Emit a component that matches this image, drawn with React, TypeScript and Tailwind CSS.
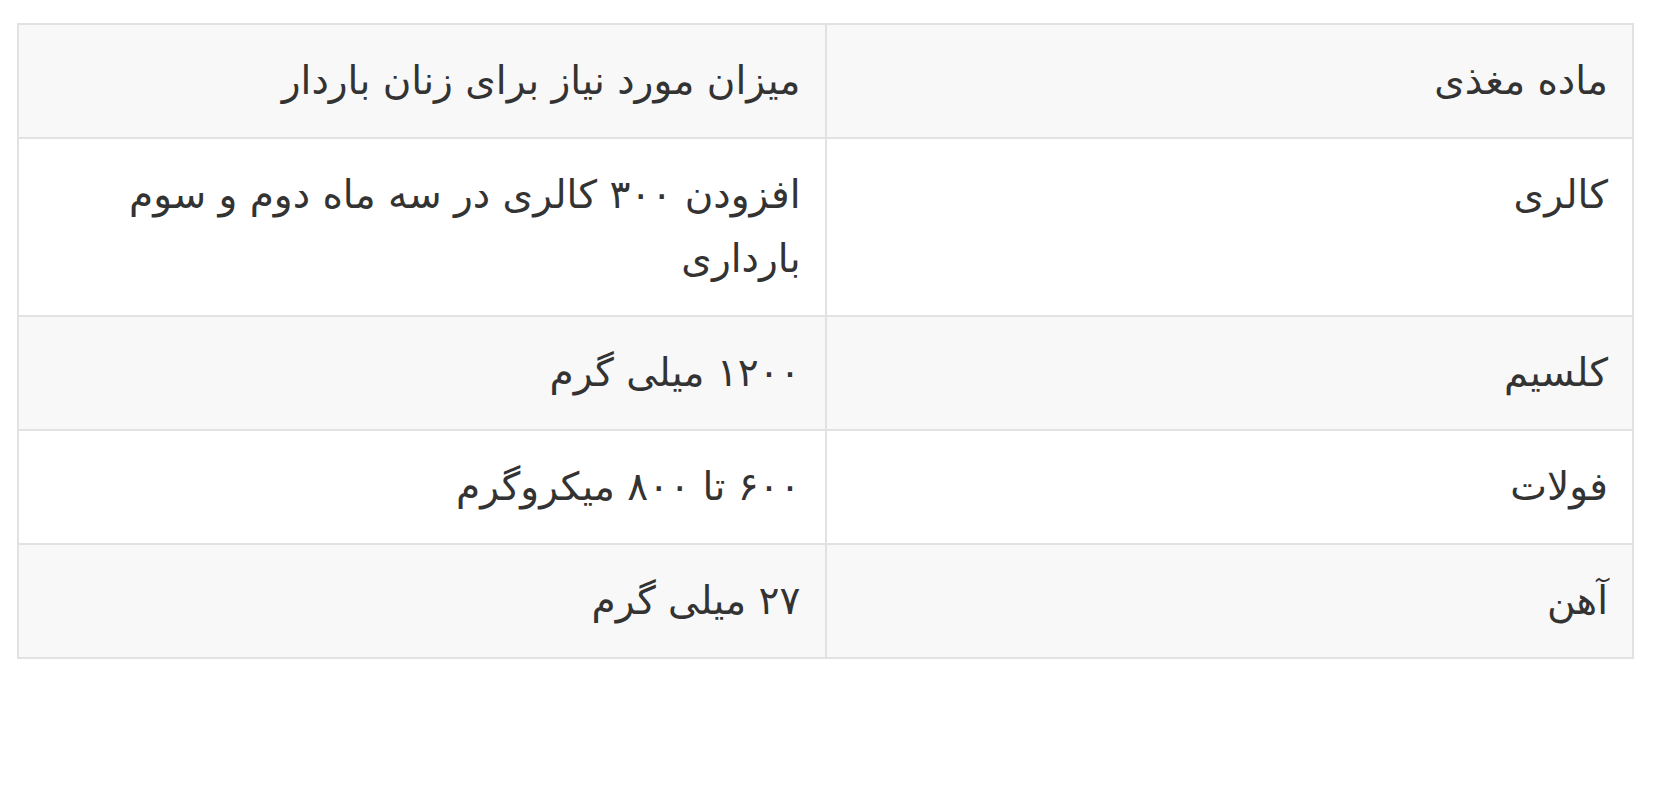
const rows: [string, string][] = [
  ["کالری", "افزودن ۳۰۰ کالری در سه ماه دوم و سوم بارداری"],
  ["کلسیم", "۱۲۰۰ میلی گرم"],
  ["فولات", "۶۰۰ تا ۸۰۰ میکروگرم"],
  ["آهن", "۲۷ میلی گرم"],
];

export default function App() {
  return (
    <div className="min-h-[800px] bg-white pt-[23px] pl-[17px] pr-[31px]" style={{ fontFamily: '"DejaVu Sans", "Noto Sans", sans-serif' }}>
      <table dir="rtl" className="w-full table-fixed border-collapse border-2 border-[#e2e2e2] text-[#333] text-[39px] leading-[64px]">
        <thead>
          <tr className="bg-[#f8f8f8]">
            <th className="border-2 border-[#e2e2e2] px-[24px] py-[24px] text-right font-normal">ماده مغذی</th>
            <th className="border-2 border-[#e2e2e2] px-[24px] py-[24px] text-right font-normal">میزان مورد نیاز برای زنان باردار</th>
          </tr>
        </thead>
        <tbody>
          {rows.map(([a, b], i) => (
            <tr key={a} className={i % 2 === 1 ? "bg-[#f8f8f8]" : "bg-white"}>
              <td className="border-2 border-[#e2e2e2] px-[24px] py-[24px] align-top">{a}</td>
              <td className="border-2 border-[#e2e2e2] pr-[24px] pl-[60px] py-[24px] align-top">{b}</td>
            </tr>
          ))}
        </tbody>
      </table>
    </div>
  );
}
